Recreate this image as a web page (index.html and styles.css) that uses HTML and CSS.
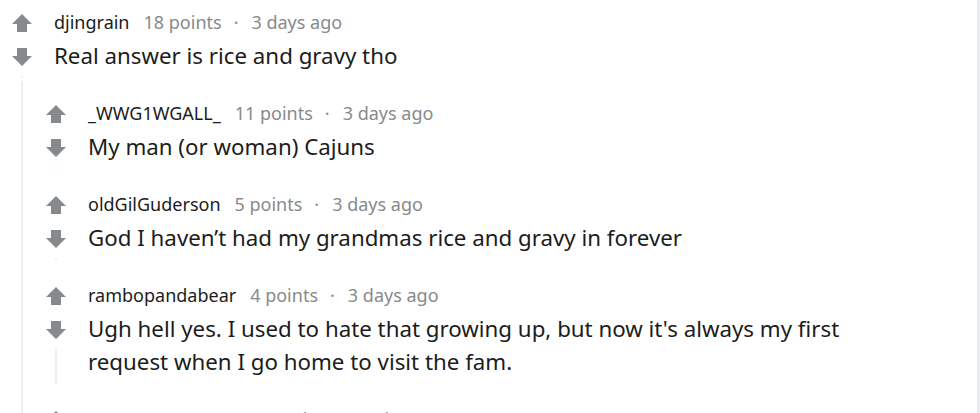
FILE: index.html
```html
<!DOCTYPE html>
<html>
<head>
<meta charset="utf-8">
<link rel="stylesheet" href="styles.css">
</head>
<body>
<div class="page">
  <div class="comment top">
    <div class="row">
      <div class="votes">
        <div class="vote up"><svg viewBox="0 0 20 18" width="20" height="18"><polygon points="10,0 20,10 15,10 15,18 5,18 5,10 0,10"/></svg></div>
        <div class="vote down"><svg viewBox="0 0 20 18" width="20" height="18"><polygon points="10,18 20,8 15,8 15,0 5,0 5,8 0,8"/></svg></div>
        <div class="thread"></div>
      </div>
      <div class="content">
        <div class="meta"><span class="user">djingrain</span><span class="points">18 points</span><span class="dot">·</span><span class="time">3 days ago</span></div>
        <p class="body">Real answer is rice and gravy tho</p>
      </div>
    </div>
    <div class="children">
      <div class="comment">
        <div class="row">
          <div class="votes">
            <div class="vote up"><svg viewBox="0 0 20 18" width="20" height="18"><polygon points="10,0 20,10 15,10 15,18 5,18 5,10 0,10"/></svg></div>
            <div class="vote down"><svg viewBox="0 0 20 18" width="20" height="18"><polygon points="10,18 20,8 15,8 15,0 5,0 5,8 0,8"/></svg></div>
            <div class="thread"></div>
          </div>
          <div class="content">
            <div class="meta"><span class="user">_WWG1WGALL_</span><span class="points">11 points</span><span class="dot">·</span><span class="time">3 days ago</span></div>
            <p class="body">My man (or woman) Cajuns</p>
          </div>
        </div>
      </div>
      <div class="comment">
        <div class="row">
          <div class="votes">
            <div class="vote up"><svg viewBox="0 0 20 18" width="20" height="18"><polygon points="10,0 20,10 15,10 15,18 5,18 5,10 0,10"/></svg></div>
            <div class="vote down"><svg viewBox="0 0 20 18" width="20" height="18"><polygon points="10,18 20,8 15,8 15,0 5,0 5,8 0,8"/></svg></div>
            <div class="thread"></div>
          </div>
          <div class="content">
            <div class="meta"><span class="user">oldGilGuderson</span><span class="points">5 points</span><span class="dot">·</span><span class="time">3 days ago</span></div>
            <p class="body">God I haven’t had my grandmas rice and gravy in forever</p>
          </div>
        </div>
      </div>
      <div class="comment">
        <div class="row">
          <div class="votes">
            <div class="vote up"><svg viewBox="0 0 20 18" width="20" height="18"><polygon points="10,0 20,10 15,10 15,18 5,18 5,10 0,10"/></svg></div>
            <div class="vote down"><svg viewBox="0 0 20 18" width="20" height="18"><polygon points="10,18 20,8 15,8 15,0 5,0 5,8 0,8"/></svg></div>
            <div class="thread"></div>
          </div>
          <div class="content">
            <div class="meta"><span class="user">rambopandabear</span><span class="points">4 points</span><span class="dot">·</span><span class="time">3 days ago</span></div>
            <p class="body">Ugh hell yes. I used to hate that growing up, but now it's always my first request when I go home to visit the fam.</p>
          </div>
        </div>
      </div>
      <div class="comment">
        <div class="row">
          <div class="votes">
            <div class="vote up"><svg viewBox="0 0 20 18" width="20" height="18"><polygon points="10,0 20,10 15,10 15,18 5,18 5,10 0,10"/></svg></div>
          </div>
          <div class="content">
            <div class="meta"><span class="user">swampqueen_maw</span><span class="points">7 points</span><span class="dot">·</span><span class="time">3 days ago</span></div>
          </div>
        </div>
      </div>
    </div>
  </div>
</div>
</body>
</html>
```

FILE: styles.css
```css
html, body {
  margin: 0;
  padding: 0;
  background: #ffffff;
  overflow: hidden;
}

.page {
  width: 977px;
  height: 413px;
  border-right: 3px solid #e9ebee;
  font-family: "Noto Sans", "Open Sans", sans-serif;
  color: #1c1c1c;
  overflow: hidden;
}

.comment.top {
  padding-left: 12px;
  padding-top: 10px;
}

.comment {
  padding-top: 23px;
}

.row {
  display: flex;
  gap: 22px;
}

.votes {
  width: 20px;
  flex: none;
  display: flex;
  flex-direction: column;
  align-items: center;
}

.vote {
  display: flex;
  align-items: center;
  justify-content: center;
  fill: #878a8c;
}

.vote.up {
  height: 24px;
  padding-top: 1px;
}

.vote.down {
  height: 33px;
  margin-top: 5px;
}

.thread {
  flex: 1;
  width: 2px;
  margin-top: 3px;
  background: #edeff1;
}

.content {
  flex: 1;
  padding-bottom: 6px;
}

.meta {
  height: 24px;
  line-height: 24px;
  font-size: 18px;
  white-space: nowrap;
}

.user {
  color: #1c1c1c;
}

.points, .time, .dot {
  color: #878a8c;
}

.points {
  margin-left: 14px;
}

.dot {
  margin: 0 13px 0 12px;
}

.body {
  margin: 5px 0 0;
  font-size: 22.3px;
  line-height: 33px;
  max-width: 780px;
}

.children {
  margin-left: 9px;
  border-left: 2px solid #edeff1;
  padding-left: 23px;
  margin-top: 3px;
}

.children .comment:first-child {
  padding-top: 20px;
}
```
